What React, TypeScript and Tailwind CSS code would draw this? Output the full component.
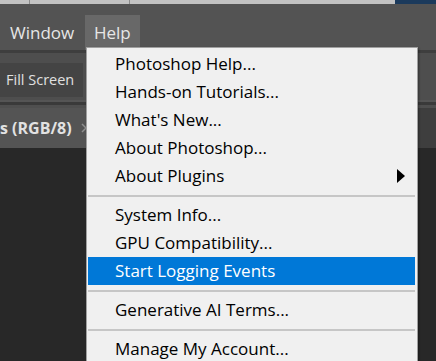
const items: (string | { label: string; sub?: boolean; active?: boolean })[] = [
  { label: "Photoshop Help..." },
  { label: "Hands-on Tutorials..." },
  { label: "What's New..." },
  { label: "About Photoshop..." },
  { label: "About Plugins", sub: true },
  "sep",
  { label: "System Info..." },
  { label: "GPU Compatibility..." },
  { label: "Start Logging Events", active: true },
  "sep",
  { label: "Generative AI Terms..." },
  "sep",
  { label: "Manage My Account..." },
];

export default function App() {
  return (
    <div
      className="relative w-[436px] h-[361px] overflow-hidden bg-[#282828]"
      style={{ fontFamily: '"Open Sans", "Noto Sans", sans-serif' }}
    >
      {/* title strip */}
      <div className="flex h-[4px]">
        <div className="flex w-[395px] bg-[#c2c2c2]">
          <div className="w-[30px] border-r border-[#8a8a8a]" />
          <div className="w-[100px] border-r border-[#8a8a8a]" />
        </div>
        <div className="flex-1 bg-[#1b3a5c]" />
      </div>

      {/* menu bar */}
      <div className="flex h-[46px] items-end bg-[#535353] pl-[2px]">
        <div className="flex h-[35px] w-[83px] items-center pl-[8px] text-[17px] text-[#e6e6e6]">Window</div>
        <div className="flex h-[35px] w-[55px] items-center bg-[#686868] pl-[9px] text-[17px] text-[#e6e6e6]">Help</div>
      </div>

      {/* options bar */}
      <div className="h-[3px] bg-[#3e3e3e]" />
      <div className="flex h-[47px] flex-col justify-end bg-[#4e4e4e] pb-[3px]">
        <div className="flex h-[34px] w-[83px] items-center bg-[#444444] pl-[6px] text-[14.5px] text-[#e0e0e0]">
          Fill Screen
        </div>
      </div>
      <div className="h-[2px] bg-[#555555]" />
      <div className="h-[3px] bg-[#3a3a3a]" />

      {/* document tab */}
      <div className="flex h-[43px] items-center bg-[#4f4f4f] pt-[3px]">
        <div className="flex h-full w-[418px] items-center gap-[9px] bg-[#545454]">
          <span className="text-[16px] font-bold text-[#e2e2e2]">s (RGB/8)</span>
          <svg width="6" height="10" viewBox="0 0 6 10">
            <path d="M1 1 L5 5 L1 9" fill="none" stroke="#8f8f8f" strokeWidth="1.5" />
          </svg>
        </div>
        <div className="h-full flex-1 bg-[#3e3e3e]" />
      </div>

      {/* Help dropdown */}
      <div className="absolute left-[86px] top-[47px] w-[332px] border border-[#a0a0a0] bg-[#f0f0f0] px-[1px] pt-[2px] pb-[6px] shadow-[1px_1px_2px_rgba(0,0,0,0.35)]">
        {items.map((it, i) =>
          it === "sep" ? (
            <div key={i} className="flex h-[11px] items-center pr-[1px]">
              <div className="h-[2px] w-full bg-[#c6c6c6]" />
            </div>
          ) : typeof it === "object" ? (
            <div
              key={i}
              className={`mr-[1px] flex h-[28px] items-center justify-between pl-[27px] pr-[10px] text-[17px] ${
                it.active ? "bg-[#0078d7] text-white" : "text-black"
              }`}
            >
              <span>{it.label}</span>
              {it.sub && (
                <svg width="8" height="14" viewBox="0 0 8 14">
                  <path d="M0 0 L8 7 L0 14 Z" fill="#000" />
                </svg>
              )}
            </div>
          ) : null
        )}
      </div>
    </div>
  );
}
